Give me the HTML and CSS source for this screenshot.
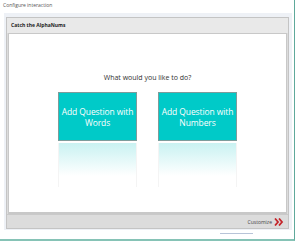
FILE: index.html
```
<!DOCTYPE html>
<html lang="en">
<head>
    <meta charset="UTF-8">
    <title>Configure interaction</title>
    <link rel="stylesheet" href="styles.css">
</head>
<body>
    <div class="window">
        <div class="title">Configure interaction</div>
        <div class="frame">
            <div class="panel">
                <div class="head">Catch the AlphaNums</div>
                <div class="content">
                    <p class="ask">What would you like to do?</p>
                    <div class="choices">
                        <div class="choice">
                            <div class="btn">Add Question with Words</div>
                            <div class="mirror"></div>
                        </div>
                        <div class="choice">
                            <div class="btn">Add Question with Numbers</div>
                            <div class="mirror"></div>
                        </div>
                    </div>
                </div>
                <div class="foot">
                    <span class="customize">Customize</span>
                    <svg class="chev" width="10" height="8" viewBox="0 0 10 8">
                        <path d="M1 0.5 L4 4 L1 7.5 M5 0.5 L8 4 L5 7.5" fill="none" stroke="#c4252b" stroke-width="1.8"/>
                    </svg>
                </div>
            </div>
        </div>
        <div class="below">
            <div class="scroll"></div>
        </div>
    </div>
</body>
</html>
```
FILE: styles.css
```
html, body { margin: 0; padding: 0; background: #fff; }
body {
    font-family: "Open Sans", "Noto Sans", sans-serif;
    color: #333;
}
.window {
    width: 294px;
    height: 239px;
    border-right: 1px solid #5fa99b;
    border-bottom: 2px solid #86c3b6;
}
.title {
    height: 13px;
    font-size: 5px;
    line-height: 10px;
    padding-left: 3px;
    color: #555;
}
.frame {
    margin: 0 2px 0 4px;
    background: #eef1f6;
    padding: 4px 3px 1px 2px;
}
.panel {
    border: 1px solid #c4c4c4;
    background: #dcdcdc;
}
.head {
    height: 15px;
    line-height: 15px;
    font-size: 5px;
    font-weight: bold;
    padding-left: 4px;
    background: #e9e9e9;
    color: #222;
}
.content {
    margin: 0 1px;
    height: 178px;
    background: #fff;
    border: 1px solid #c8c8c8;
    border-bottom-width: 2px;
}
.ask {
    margin: 39px 0 0;
    text-align: center;
    font-size: 7px;
    line-height: 10px;
    color: #333;
}
.choices {
    display: flex;
    justify-content: center;
    gap: 21px;
    margin-top: 9px;
}
.choice { width: 79px; }
.btn {
    height: 47px;
    background: #00cac8;
    border: 1px solid #7d9c9b;
    color: #fff;
    font-size: 8.5px;
    line-height: 11px;
    letter-spacing: -0.1px;
    text-align: center;
    display: flex;
    align-items: center;
    justify-content: center;
    padding: 0 1px;
}
.mirror {
    height: 44px;
    margin-top: 2px;
    background: linear-gradient(to bottom, #c9f2f2, #ffffff 75%);
    border-left: 1px solid #f4f4f4;
    border-right: 1px solid #f4f4f4;
}
.foot {
    height: 13px;
    display: flex;
    align-items: center;
    justify-content: flex-end;
    gap: 2px;
    padding-right: 4px;
    border-top: 1px solid #c9c9c9;
}
.customize {
    font-size: 5px;
    color: #444;
}
.chev { display: block; }
.below {
    height: 9px;
    position: relative;
}
.scroll {
    position: absolute;
    left: 220px;
    top: 3px;
    width: 33px;
    height: 1px;
    background: #b8c4d8;
}
```
